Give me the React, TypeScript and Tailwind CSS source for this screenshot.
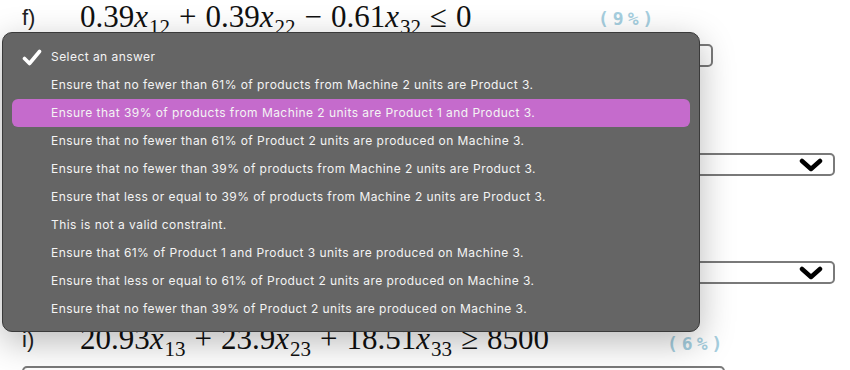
const options = [
  'Select an answer',
  'Ensure that no fewer than 61% of products from Machine 2 units are Product 3.',
  'Ensure that 39% of products from Machine 2 units are Product 1 and Product 3.',
  'Ensure that no fewer than 61% of Product 2 units are produced on Machine 3.',
  'Ensure that no fewer than 39% of products from Machine 2 units are Product 3.',
  'Ensure that less or equal to 39% of products from Machine 2 units are Product 3.',
  'This is not a valid constraint.',
  'Ensure that 61% of Product 1 and Product 3 units are produced on Machine 3.',
  'Ensure that less or equal to 61% of Product 2 units are produced on Machine 3.',
  'Ensure that no fewer than 39% of Product 2 units are produced on Machine 3.',
];

function Chevron() {
  return (
    <svg width="24" height="14" viewBox="0 0 24 14" className="shrink-0">
      <polyline points="3,3 12,11 21,3" fill="none" stroke="#000" strokeWidth="4.5" strokeLinecap="round" strokeLinejoin="round" />
    </svg>
  );
}

function Tick() {
  return (
    <svg width="20" height="17" viewBox="0 0 20 17">
      <polyline points="2.5,9.5 7.5,14.5 17.5,2.5" fill="none" stroke="#fff" strokeWidth="3.6" strokeLinecap="round" strokeLinejoin="round" />
    </svg>
  );
}

function SelectBox({ width, chevron = true }: { width: string; chevron?: boolean }) {
  return (
    <div className={`${width} h-[23px] border-2 border-[#7a7a7a] rounded-[5px] bg-white flex items-center justify-end pr-[10px]`}>
      {chevron && <Chevron />}
    </div>
  );
}

function X({ sub }: { sub: string }) {
  return (
    <>
      <i className="mr-[1px]">x</i>
      <span className="inline-block relative top-[7px] text-[21px] leading-none">{sub}</span>
    </>
  );
}

function Op({ c }: { c: string }) {
  return <span className="mx-[9px]">{c}</span>;
}

function Weight({ value }: { value: string }) {
  return (
    <span className="font-['DejaVu_Sans_Mono',monospace] text-[18px] font-bold tracking-[4px] text-[#a6cfe0]">
      ({value}%)
    </span>
  );
}

export default function App() {
  return (
    <div className="relative w-[850px] h-[370px] overflow-hidden bg-white font-['Liberation_Sans',sans-serif]">
      <div className="pl-[22px] flex flex-col">
        <div className="h-[38px] flex items-start">
          <span className="text-[22px] text-[#222] w-[58px] leading-[36px]">f)</span>
          <span className="font-['Liberation_Serif',serif] text-[31px] text-[#111] leading-[34px] w-[518px] whitespace-nowrap">
            0.39<X sub="12" /><Op c="+" />0.39<X sub="22" /><Op c="−" />0.61<X sub="32" /><Op c="≤" />0
          </span>
          <span className="leading-[38px]"><Weight value="9" /></span>
        </div>
        <div className="mt-[6px]">
          <SelectBox width="w-[691px]" chevron={false} />
        </div>
        <div className="h-[86px]" />
        <SelectBox width="w-[813px]" />
        <div className="h-[85px]" />
        <SelectBox width="w-[813px]" />
        <div className="h-[38px]" />
        <div className="h-[44px] flex items-start">
          <span className="text-[22px] text-[#222] w-[58px] leading-[36px]">i)</span>
          <span className="font-['Liberation_Serif',serif] text-[31px] text-[#111] leading-[34px] w-[587px] whitespace-nowrap">
            20.93<X sub="13" /><Op c="+" />23.9<X sub="23" /><Op c="+" />18.51<X sub="33" /><Op c="≥" />8500
          </span>
          <span className="leading-[44px]"><Weight value="6" /></span>
        </div>
        <SelectBox width="w-[703px]" chevron={false} />
      </div>

      <div className="absolute left-[2px] top-[32px] w-[698px] h-[300px] rounded-[10px] bg-[#656565] border border-[#3a3a3a] shadow-[0_10px_35px_rgba(0,0,0,0.28)] pt-[10px] px-[9px]">
        {options.map((opt, i) => (
          <div
            key={opt}
            className={`h-[28px] flex items-center rounded-[6px] ${i === 2 ? 'bg-[#c56bcc]' : ''}`}
          >
            <span className="w-[39px] flex justify-center pl-[1px]">
              {i === 0 && <Tick />}
            </span>
            <span className="font-['Inter',sans-serif] text-[12px] tracking-[0.45px] text-[#f4f4f4] whitespace-nowrap">{opt}</span>
          </div>
        ))}
      </div>
    </div>
  );
}
